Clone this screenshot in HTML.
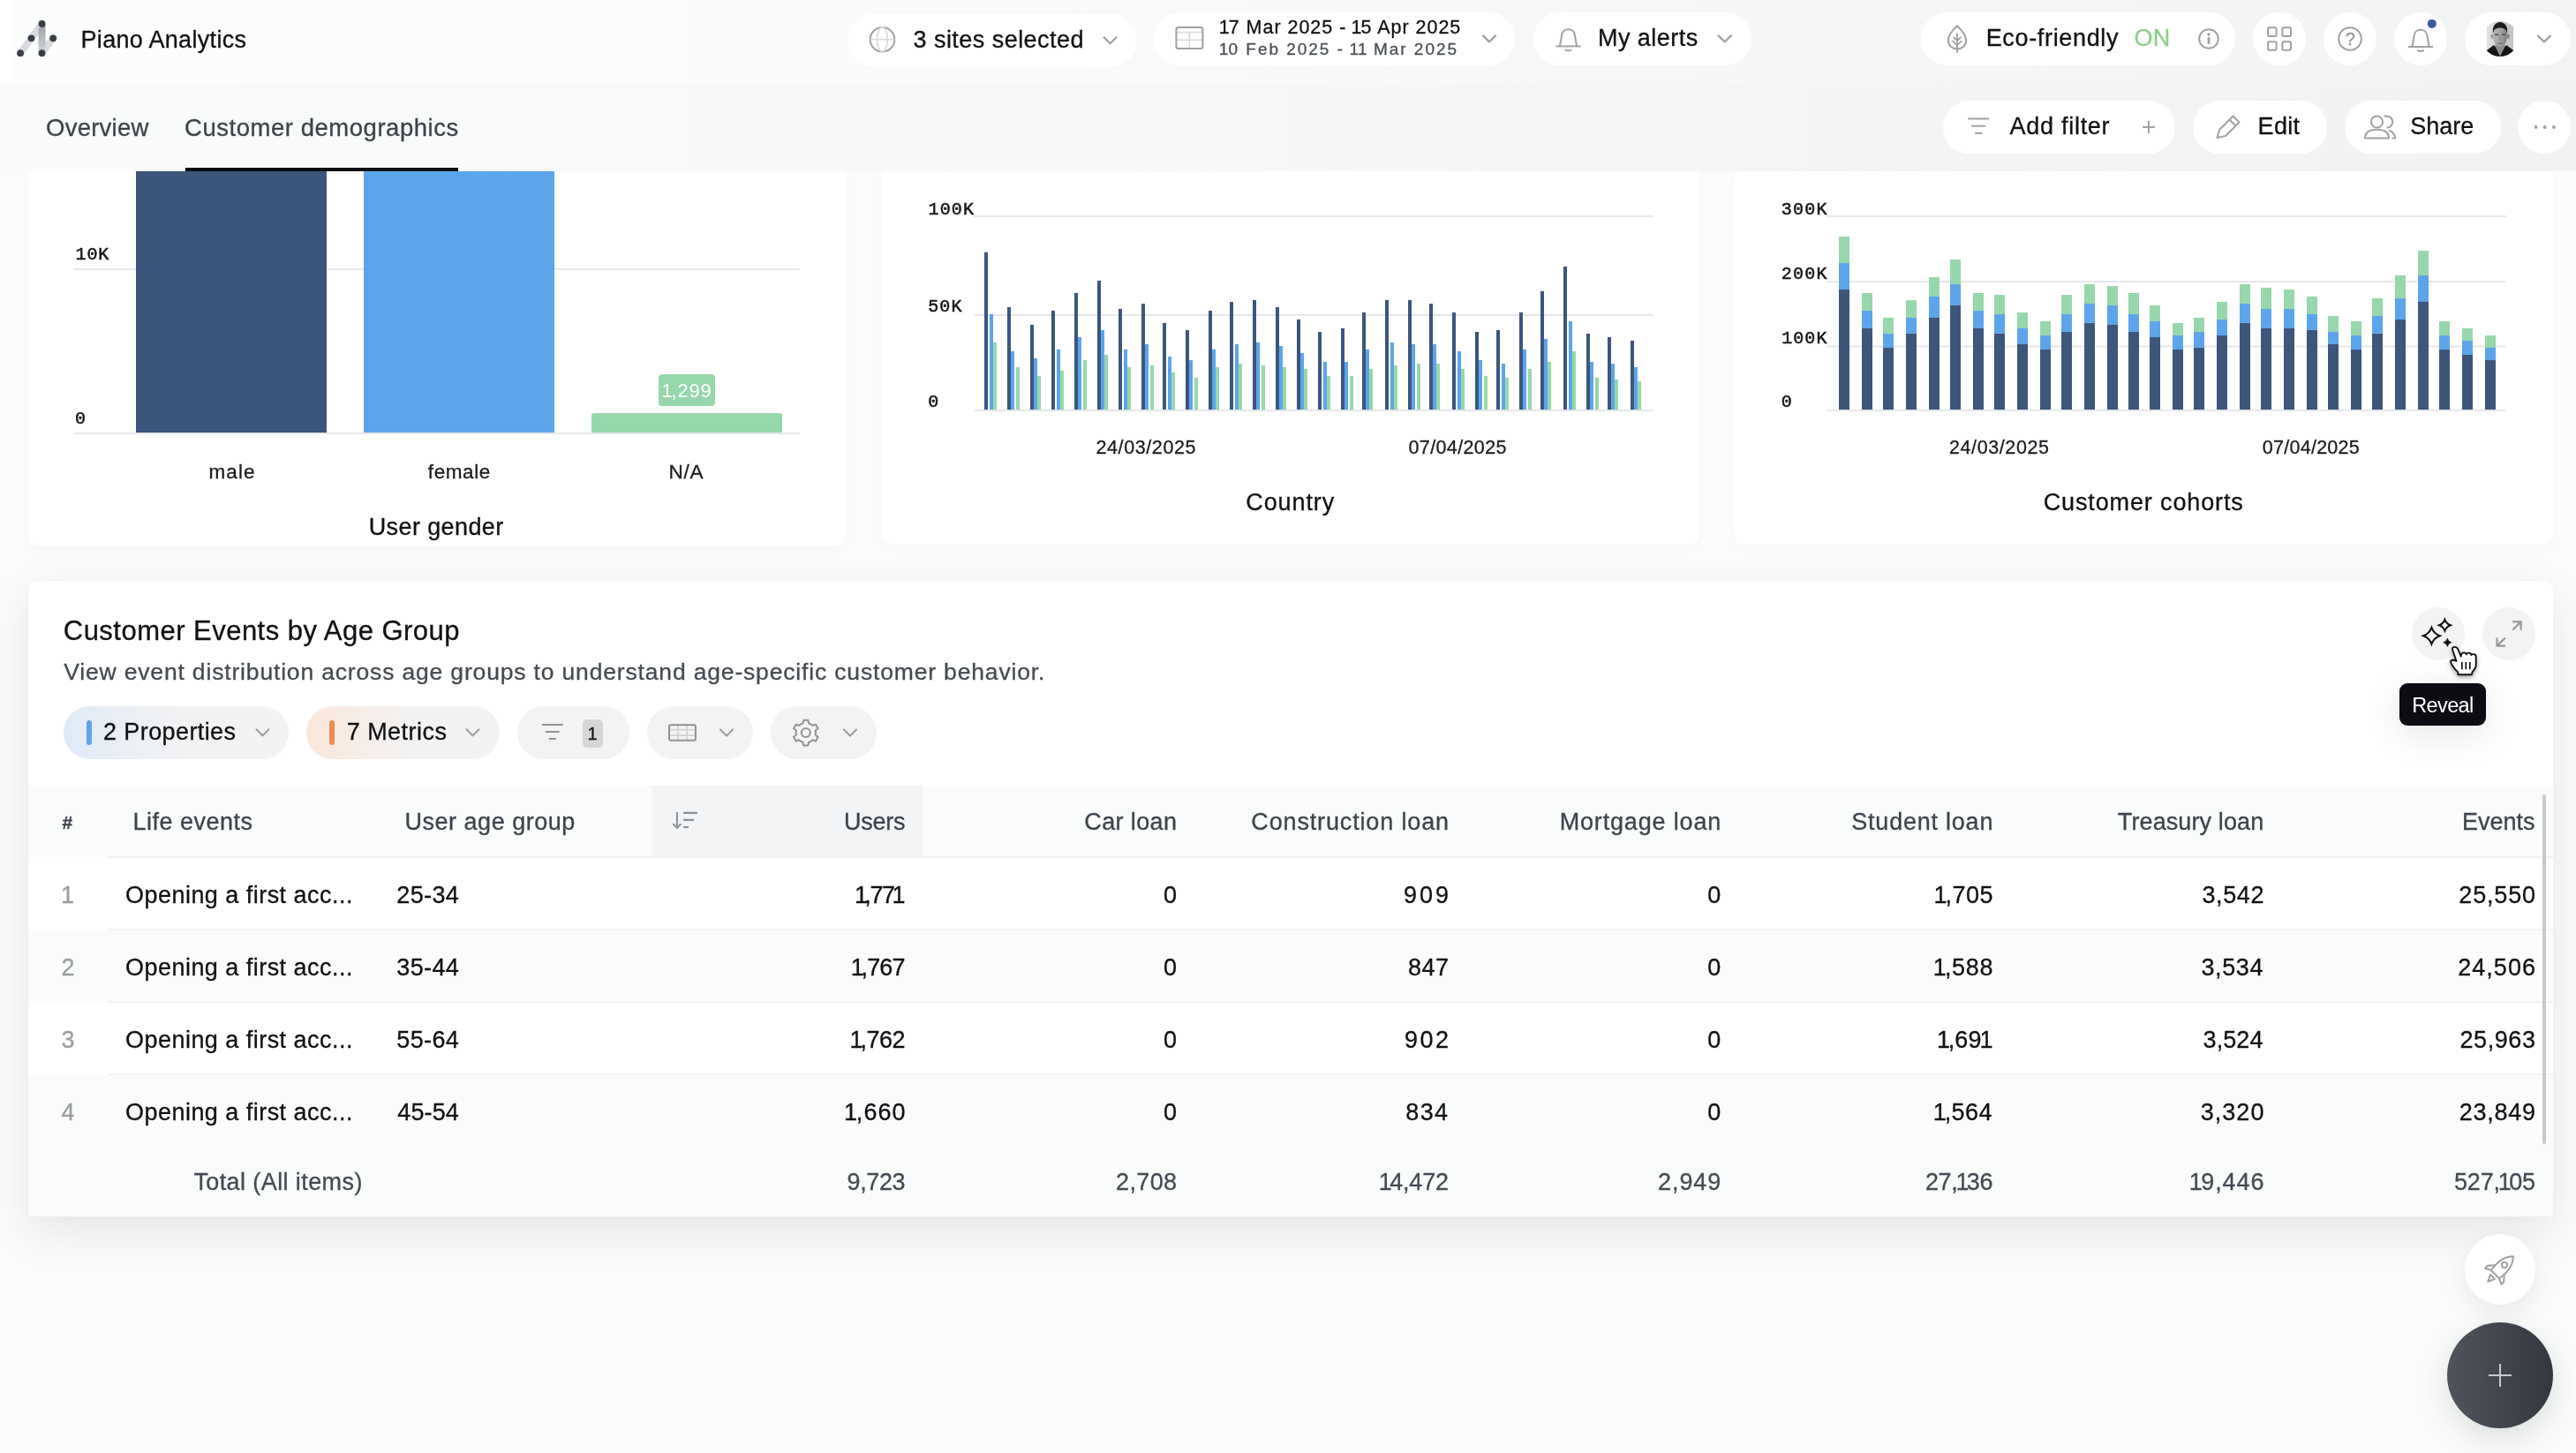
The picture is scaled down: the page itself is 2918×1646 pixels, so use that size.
<!DOCTYPE html><html lang="en"><head><meta charset="utf-8"><title>Piano Analytics</title><style>
*{box-sizing:border-box;margin:0;padding:0}
html,body{width:2918px;height:1646px;overflow:hidden;background:#fafbfb}
body{font-family:"Liberation Sans",sans-serif;color:#0f1115}
#app{position:relative;width:2918px;height:1646px;overflow:hidden;background:#fafbfb}
.t{position:absolute;white-space:nowrap;display:block}
.a{position:absolute;display:block}
.pill{position:absolute;background:#fff;border-radius:30px;height:60px}
.gp{position:absolute;background:#f3f3f3;border-radius:30px;height:60px}
.card{position:absolute;background:#fff}
svg{position:absolute;overflow:visible}
#tx{position:absolute;left:0;top:0;width:2918px;height:1646px;will-change:transform}
.t{-webkit-text-stroke:0.3px currentColor}
.t i{font-style:normal;margin:0 -0.089em 0 -0.0815em}
.m{font-family:"Liberation Mono",monospace;-webkit-text-stroke:0.55px currentColor}

</style></head><body><div id="app">
<div class="a" style="left:0;top:0;width:2918px;height:94px;background:linear-gradient(90deg,#fcfdfd 0%,#f9fafa 40%,#f2f3f3 100%)"></div>
<div class="a" style="left:0;top:94px;width:2918px;height:100px;background:linear-gradient(90deg,#fafbfb 0%,#f7f8f8 40%,#f1f2f2 100%)"></div>
<div class="a" style="left:0;top:0;width:12px;height:94px;background:#fff"></div>
<div class="card" style="left:32px;top:194px;width:926px;height:424px;border-radius:0 0 10px 10px;box-shadow:0 4px 14px rgba(0,0,0,.015)"></div>
<div class="card" style="left:999px;top:194px;width:925px;height:423px;border-radius:0 0 10px 10px;box-shadow:0 4px 14px rgba(0,0,0,.015)"></div>
<div class="card" style="left:1965px;top:194px;width:927px;height:423px;border-radius:0 0 10px 10px;box-shadow:0 4px 14px rgba(0,0,0,.015)"></div>
<div class="card" style="left:32px;top:658px;width:2860px;height:720px;border-radius:10px 10px 0 0;box-shadow:0 18px 50px rgba(0,0,0,.085),0 2px 8px rgba(0,0,0,.02)"></div>
<div class="pill" style="left:960px;top:16px;width:328px;height:60px;"></div>
<div class="pill" style="left:1307px;top:14px;width:409px;height:60px;"></div>
<div class="pill" style="left:1737px;top:14px;width:247px;height:60px;"></div>
<div class="pill" style="left:2176px;top:14px;width:356px;height:60px;"></div>
<div class="pill" style="left:2552px;top:14px;width:60px;height:60px;"></div>
<div class="pill" style="left:2632px;top:14px;width:60px;height:60px;"></div>
<div class="pill" style="left:2712px;top:14px;width:60px;height:60px;"></div>
<div class="pill" style="left:2792px;top:14px;width:120px;height:60px;"></div>
<div class="pill" style="left:2201px;top:114px;width:263px;height:60px;"></div>
<div class="pill" style="left:2484px;top:114px;width:152px;height:60px;"></div>
<div class="pill" style="left:2656px;top:114px;width:177px;height:60px;"></div>
<div class="pill" style="left:2852px;top:114px;width:60px;height:60px;"></div>
<div class="a" style="left:210px;top:190px;width:309px;height:4px;background:#0b0c10"></div>
<div class="gp" style="left:72px;top:800px;width:255px;height:60px;background:linear-gradient(90deg,#dfeaf8 0%,#eaeef4 25%,#f2f2f3 55%,#f3f3f3 100%)"></div>
<div class="gp" style="left:347px;top:800px;width:219px;height:60px;background:linear-gradient(90deg,#fbe6d8 0%,#f6ece6 25%,#f3f2f2 55%,#f3f3f3 100%)"></div>
<div class="gp" style="left:586px;top:800px;width:127px;height:60px;"></div>
<div class="gp" style="left:733px;top:800px;width:120px;height:60px;"></div>
<div class="gp" style="left:873px;top:800px;width:120px;height:60px;"></div>
<div class="a" style="left:98px;top:816px;width:6px;height:28px;border-radius:3px;background:#5da5ea"></div>
<div class="a" style="left:373px;top:816px;width:6px;height:28px;border-radius:3px;background:#ea8d4e"></div>
<div class="a" style="left:660px;top:815px;width:23px;height:32px;border-radius:5px;background:#d6d6d7"></div>
<div class="gp" style="left:2732px;top:688px;width:60px;height:60px;"></div>
<div class="gp" style="left:2812px;top:688px;width:60px;height:60px;"></div>
<div class="a" style="left:32px;top:890px;width:2860px;height:81px;background:#fafbfb"></div>
<div class="a" style="left:738px;top:890px;width:307px;height:81px;background:#f3f4f6"></div>
<div class="a" style="left:122px;top:970px;width:2770px;height:2px;background:#eff0f1"></div>
<div class="a" style="left:32px;top:972px;width:2860px;height:82px;background:#ffffff"></div>
<div class="a" style="left:122px;top:1052px;width:2770px;height:2px;background:#f2f3f3"></div>
<div class="a" style="left:32px;top:1054px;width:2860px;height:82px;background:#fafbfb"></div>
<div class="a" style="left:122px;top:1134px;width:2770px;height:2px;background:#f2f3f3"></div>
<div class="a" style="left:32px;top:1136px;width:2860px;height:82px;background:#ffffff"></div>
<div class="a" style="left:122px;top:1216px;width:2770px;height:2px;background:#f2f3f3"></div>
<div class="a" style="left:32px;top:1218px;width:2860px;height:82px;background:#fafbfb"></div>
<div class="a" style="left:32px;top:1300px;width:2860px;height:78px;background:#fafbfb"></div>
<div class="a" style="left:2880px;top:900px;width:4px;height:396px;border-radius:2px;background:#c9c9cb"></div>
<div class="a" style="left:2792px;top:1398px;width:80px;height:80px;border-radius:40px;background:#fff;box-shadow:0 10px 30px rgba(0,0,0,.08)"></div>
<div class="a" style="left:2772px;top:1498px;width:120px;height:120px;border-radius:60px;background:linear-gradient(90deg,#50545d,#34373f);box-shadow:0 12px 36px rgba(0,0,0,.12)"></div>
<svg width="2918" height="1646" viewBox="0 0 2918 1646" style="left:0;top:0"><defs><linearGradient id="lg1" x1="0" y1="0" x2="0" y2="1"><stop offset="0" stop-color="#9c9eaa"/><stop offset="1" stop-color="#d4d5da"/></linearGradient></defs><line x1="23.1" y1="60.2" x2="47.5" y2="27" stroke="#d9dade" stroke-width="8" stroke-linecap="round"/><line x1="47.5" y1="60.2" x2="60.2" y2="43.3" stroke="#d9dade" stroke-width="8" stroke-linecap="round"/><path d="M43.5 32.5 L51.5 27 L51.5 54.8 L43.5 60.2 Z" fill="url(#lg1)"/><circle cx="47.5" cy="27" r="3.9" fill="#3b3e47"/><circle cx="35.5" cy="43.3" r="3.9" fill="#3b3e47"/><circle cx="60.2" cy="43.3" r="3.9" fill="#3b3e47"/><circle cx="23.1" cy="60.2" r="3.9" fill="#3b3e47"/><circle cx="47.5" cy="60.2" r="3.9" fill="#3b3e47"/><circle cx="999.5" cy="44.7" r="13.8" fill="none" stroke="#9ea1a5" stroke-width="2"/><ellipse cx="999.5" cy="44.7" rx="6" ry="13.8" fill="none" stroke="#d9dadc" stroke-width="1.6"/><line x1="985.7" y1="44.7" x2="1013.3" y2="44.7" stroke="#d9dadc" stroke-width="1.6"/><polyline points="1250.5,42.3 1257.5,49.3 1264.5,42.3" fill="none" stroke="#9ea1a5" stroke-width="2.2" stroke-linecap="round" stroke-linejoin="round"/><line x1="1332" y1="36.5" x2="1363" y2="36.5" stroke="#d9dadc" stroke-width="1.6"/><line x1="1332" y1="45.3" x2="1363" y2="45.3" stroke="#d9dadc" stroke-width="1.6"/><line x1="1347.3" y1="36.5" x2="1347.3" y2="55" stroke="#d9dadc" stroke-width="1.6"/><rect x="1332.4" y="31" width="30" height="24" rx="2.5" fill="none" stroke="#9ea1a5" stroke-width="2"/><polyline points="1680,40.4 1687.0,47.4 1694,40.4" fill="none" stroke="#9ea1a5" stroke-width="2.2" stroke-linecap="round" stroke-linejoin="round"/><path d="M1762.5 52.4 H1790.5" stroke="#9ea1a5" stroke-width="2" fill="none"/><path d="M1766.9 52.4 L1769.1 39.9 C1769.9 30.9 1783.1 30.9 1783.9 39.9 L1786.1 52.4" stroke="#9ea1a5" stroke-width="2" fill="none" stroke-linejoin="round"/><path d="M1772.7 56.4 Q1776.5 58.4 1780.3 56.4" stroke="#9ea1a5" stroke-width="2" fill="none"/><polyline points="1946.5,40.4 1953.75,47.4 1961,40.4" fill="none" stroke="#9ea1a5" stroke-width="2.2" stroke-linecap="round" stroke-linejoin="round"/><path d="M2217 29.3 C2211 35 2206.8 40.5 2206.8 45.8 C2206.8 51.5 2211.2 55.4 2217 55.4 C2222.8 55.4 2227.2 51.5 2227.2 45.8 C2227.2 40.5 2223 35 2217 29.3 Z" fill="none" stroke="#9ea1a5" stroke-width="2" stroke-linejoin="round"/><path d="M2217 37.5 V59.8 M2217 46.2 L2212.6 42 M2217 46.2 L2221.4 42 M2217 51.2 L2211.6 46.2 M2217 51.2 L2222.4 46.2" fill="none" stroke="#9ea1a5" stroke-width="1.8"/><circle cx="2502" cy="44" r="10.8" fill="none" stroke="#9ea1a5" stroke-width="2"/><circle cx="2502" cy="39" r="1.8" fill="#9ea1a5"/><rect x="2500.6" y="42.2" width="2.8" height="7.6" fill="#9ea1a5"/><rect x="2569" y="31.3" width="9.6" height="9.6" rx="1.5" fill="none" stroke="#9ea1a5" stroke-width="2"/><rect x="2569" y="47.2" width="9.6" height="9.6" rx="1.5" fill="none" stroke="#9ea1a5" stroke-width="2"/><rect x="2585.4" y="31.3" width="9.6" height="9.6" rx="1.5" fill="none" stroke="#9ea1a5" stroke-width="2"/><rect x="2585.4" y="47.2" width="9.6" height="9.6" rx="1.5" fill="none" stroke="#9ea1a5" stroke-width="2"/><circle cx="2662" cy="44" r="12.8" fill="none" stroke="#9ea1a5" stroke-width="2"/><path d="M2728.0 53 H2756.0" stroke="#9ea1a5" stroke-width="2" fill="none"/><path d="M2732.4 53 L2734.6 40.5 C2735.4 31.5 2748.6 31.5 2749.4 40.5 L2751.6 53" stroke="#9ea1a5" stroke-width="2" fill="none" stroke-linejoin="round"/><path d="M2738.2 57 Q2742 59 2745.8 57" stroke="#9ea1a5" stroke-width="2" fill="none"/><circle cx="2754.8" cy="26.9" r="5" fill="#3a5aa6"/><defs><clipPath id="av"><circle cx="2832" cy="44" r="20"/></clipPath><linearGradient id="avbg" x1="0" y1="0" x2="1" y2="0"><stop offset="0" stop-color="#e2e2e2"/><stop offset="1" stop-color="#c2c2c2"/></linearGradient><linearGradient id="avf" x1="0" y1="0" x2="1" y2="0"><stop offset="0" stop-color="#b4b4b4"/><stop offset="0.55" stop-color="#a2a2a2"/><stop offset="1" stop-color="#7e7e7e"/></linearGradient><filter id="avb" x="-20%" y="-20%" width="140%" height="140%"><feGaussianBlur stdDeviation="0.55"/></filter></defs><g clip-path="url(#av)"><rect x="2817" y="22" width="30" height="44" fill="url(#avbg)"/><g filter="url(#avb)"><path d="M2826.5 47 H2837.5 V64 H2826.5 Z" fill="#8c8c8c"/><path d="M2815 58.5 L2824.6 51.2 L2826.4 52.4 L2832 64 L2837.6 52.4 L2839.4 51.2 L2849 58.5 V68 H2815 Z" fill="#151515"/><ellipse cx="2822.8" cy="41.2" rx="1.5" ry="2.8" fill="#9a9a9a"/><ellipse cx="2841.2" cy="41.2" rx="1.5" ry="2.8" fill="#808080"/><path d="M2824 35 C2824 26 2840 26 2840 35 L2839.6 44 C2839 49.5 2835.5 52.6 2832 52.6 C2828.5 52.6 2825 49.5 2824.4 44 Z" fill="url(#avf)"/><path d="M2823.9 38 C2821.6 20.8 2842.4 20.8 2840.1 38 C2839.6 33.4 2836.8 31.4 2832 31.4 C2827.2 31.4 2824.4 33.4 2823.9 38 Z" fill="#1b1b1b"/><path d="M2826 39.2 H2830.4 M2833.8 39.2 H2838.2" stroke="#4a4a4a" stroke-width="1.5"/><path d="M2829.4 49.2 H2835" stroke="#666" stroke-width="1.2"/><path d="M2832.4 40 L2831.4 45.2 H2833.6" stroke="#7a7a7a" stroke-width="1" fill="none"/></g></g><polyline points="2874.8,40.6 2881.9,47.4 2889,40.6" fill="none" stroke="#9ea1a5" stroke-width="2.2" stroke-linecap="round" stroke-linejoin="round"/><line x1="2229.2" y1="134.5" x2="2253.2" y2="134.5" stroke="#9ea1a5" stroke-width="2"/><line x1="2233.2" y1="142.7" x2="2249.2" y2="142.7" stroke="#9ea1a5" stroke-width="2"/><line x1="2237.2" y1="150.9" x2="2245.2" y2="150.9" stroke="#9ea1a5" stroke-width="2"/><path d="M2427 144 H2441 M2434 137 V151" stroke="#9ea1a5" stroke-width="2" fill="none"/><path d="M2511.5 156 L2514 147 L2529.5 131.5 L2536.5 138.5 L2521 154 Z M2525.5 135.5 L2532.5 142.5" fill="none" stroke="#9ea1a5" stroke-width="2" stroke-linejoin="round"/><circle cx="2692.5" cy="138" r="6.6" fill="none" stroke="#9ea1a5" stroke-width="2"/><path d="M2679 156.5 C2679 149.5 2685 146.8 2692.5 146.8 C2700 146.8 2706 149.5 2706 156.5 Z" fill="none" stroke="#9ea1a5" stroke-width="2" stroke-linejoin="round"/><path d="M2700.5 131.8 C2706.5 130.5 2710.2 134 2710.2 138 C2710.2 141.5 2707.5 144.4 2703.5 144.6 M2706 147.6 C2710.5 149 2713 152 2713.2 156.5 H2709.5" fill="none" stroke="#9ea1a5" stroke-width="2"/><circle cx="2872.5" cy="144" r="1.9" fill="#9ea1a5"/><circle cx="2882.7" cy="144" r="1.9" fill="#9ea1a5"/><circle cx="2892.9" cy="144" r="1.9" fill="#9ea1a5"/><polyline points="290.5,826.3 297.5,833.3 304.5,826.3" fill="none" stroke="#9ea1a5" stroke-width="2.2" stroke-linecap="round" stroke-linejoin="round"/><polyline points="528.5,826.3 535.5,833.3 542.5,826.3" fill="none" stroke="#9ea1a5" stroke-width="2.2" stroke-linecap="round" stroke-linejoin="round"/><line x1="613.8" y1="821" x2="637.8" y2="821" stroke="#8f9296" stroke-width="2"/><line x1="618.0" y1="829" x2="633.5999999999999" y2="829" stroke="#8f9296" stroke-width="2"/><line x1="621.9" y1="837" x2="629.6999999999999" y2="837" stroke="#8f9296" stroke-width="2"/><path d="M758 826.7 H788 M758 833.1 H788 M767.8 821 V839 M778.2 821 V839" stroke="#d0d1d3" stroke-width="1.6" fill="none"/><rect x="758" y="821.2" width="30" height="17.6" rx="2" fill="none" stroke="#8f9296" stroke-width="2"/><polyline points="816,826.5 823.0,833.5 830,826.5" fill="none" stroke="#9ea1a5" stroke-width="2.2" stroke-linecap="round" stroke-linejoin="round"/><path d="M907.65 820.16 L909.52 819.39 L910.24 815.73 L915.36 815.73 L916.08 819.39 L918.84 820.67 L920.44 821.91 L923.97 820.70 L926.53 825.13 L923.71 827.58 L923.99 830.61 L923.71 832.62 L926.53 835.07 L923.97 839.50 L920.44 838.29 L917.95 840.04 L916.08 840.81 L915.36 844.47 L910.24 844.47 L909.52 840.81 L906.76 839.53 L905.16 838.29 L901.63 839.50 L899.07 835.07 L901.89 832.62 L901.61 829.59 L901.89 827.58 L899.07 825.13 L901.63 820.70 L905.16 821.91 Z" fill="none" stroke="#8f9296" stroke-width="2" stroke-linejoin="round"/><circle cx="912.8" cy="830.1" r="5" fill="none" stroke="#8f9296" stroke-width="2"/><polyline points="956,826.5 963.0,833.5 970,826.5" fill="none" stroke="#9ea1a5" stroke-width="2.2" stroke-linecap="round" stroke-linejoin="round"/><path d="M766.9 920 V937.6 M762.4 933.2 L766.9 937.8 L771.4 933.2" stroke="#8d9197" stroke-width="2" fill="none"/><path d="M774.1 920.8 H790 M774.1 928.9 H786 M774.1 937 H780" stroke="#8d9197" stroke-width="2.2" fill="none"/><path d="M2754.4 710.9 Q2756.844 717.856 2763.8 720.3 Q2756.844 722.7439999999999 2754.4 729.6999999999999 Q2751.956 722.7439999999999 2745.0 720.3 Q2751.956 717.856 2754.4 710.9 Z" fill="none" stroke="#0f1115" stroke-width="2" stroke-linejoin="miter" stroke-miterlimit="6"/><path d="M2769.4 701.8000000000001 Q2771.0640000000003 706.5360000000001 2775.8 708.2 Q2771.0640000000003 709.864 2769.4 714.6 Q2767.736 709.864 2763.0 708.2 Q2767.736 706.5360000000001 2769.4 701.8000000000001 Z" fill="none" stroke="#0f1115" stroke-width="2" stroke-linejoin="miter" stroke-miterlimit="6"/><path d="M2772.3 723.1999999999999 Q2773.2200000000003 726.88 2776.9 727.8 Q2773.2200000000003 728.7199999999999 2772.3 732.4 Q2771.38 728.7199999999999 2767.7000000000003 727.8 Q2771.38 726.88 2772.3 723.1999999999999 Z" fill="#0f1115" stroke="#0f1115" stroke-width="0.8" stroke-linejoin="miter" stroke-miterlimit="6"/><path d="M2846.3 713.6 L2855.6 704.4 M2846.2 704.4 H2855.6 V713.8" stroke="#969a9e" stroke-width="2.2" fill="none"/><path d="M2837.8 722.6 L2828.5 731.6 M2828.5 722.4 V731.6 H2838" stroke="#969a9e" stroke-width="2.2" fill="none"/><g transform="translate(2832,1438) rotate(45)" fill="none" stroke="#9ea1a5" stroke-width="2" stroke-linejoin="round"><path d="M0 -21 C7 -14 8.5 -4 6.5 8 H-6.5 C-8.5 -4 -7 -14 0 -21 Z"/><circle cx="0" cy="-7" r="3.2"/><path d="M-6.8 0 L-13 7 V11 L-6.5 8 M6.8 0 L13 7 V11 L6.5 8"/><path d="M-3.5 12 L0 19.5 L3.5 12 Z"/></g><path d="M2819 1558 H2845 M2832 1545 V1571" stroke="#c9cacd" stroke-width="2" fill="none"/><rect x="84" y="304" width="822" height="2" fill="#e6e7e9"/><rect x="84" y="490" width="822" height="2" fill="#e6e7e9"/><rect x="154" y="194" width="216" height="296" fill="#3d567c"/><rect x="412" y="194" width="216" height="296" fill="#5da5ea"/><path d="M670 490 V471 Q670 468 673 468 H883 Q886 468 886 471 V490 Z" fill="#96d8ab"/><rect x="746" y="424" width="64" height="36" rx="4" fill="#96d8ab"/><rect x="1103" y="244" width="770" height="2" fill="#e6e7e9"/><rect x="1103" y="356" width="770" height="2" fill="#e6e7e9"/><rect x="1103" y="464" width="770" height="2" fill="#e6e7e9"/><rect x="1115" y="285.7" width="4" height="178.3" fill="#3d567c"/><rect x="1121" y="355.9" width="4" height="108.1" fill="#5da5ea"/><rect x="1125" y="387.9" width="4" height="76.1" fill="#96d8ab"/><rect x="1141" y="347.9" width="4" height="116.1" fill="#3d567c"/><rect x="1145" y="397.9" width="4" height="66.1" fill="#5da5ea"/><rect x="1151" y="415.9" width="4" height="48.1" fill="#96d8ab"/><rect x="1167" y="367.9" width="4" height="96.1" fill="#3d567c"/><rect x="1171" y="405.9" width="4" height="58.1" fill="#5da5ea"/><rect x="1175" y="425.8" width="4" height="38.2" fill="#96d8ab"/><rect x="1191" y="351.9" width="4" height="112.1" fill="#3d567c"/><rect x="1197" y="395.8" width="4" height="68.2" fill="#5da5ea"/><rect x="1201" y="419.9" width="4" height="44.1" fill="#96d8ab"/><rect x="1217" y="331.9" width="4" height="132.1" fill="#3d567c"/><rect x="1221" y="381.9" width="4" height="82.1" fill="#5da5ea"/><rect x="1227" y="407.9" width="4" height="56.1" fill="#96d8ab"/><rect x="1243" y="317.9" width="4" height="146.1" fill="#3d567c"/><rect x="1247" y="373.9" width="4" height="90.1" fill="#5da5ea"/><rect x="1251" y="401.9" width="4" height="62.1" fill="#96d8ab"/><rect x="1267" y="349.9" width="4" height="114.1" fill="#3d567c"/><rect x="1273" y="395.8" width="4" height="68.2" fill="#5da5ea"/><rect x="1277" y="415.9" width="4" height="48.1" fill="#96d8ab"/><rect x="1293" y="344.0" width="4" height="120.0" fill="#3d567c"/><rect x="1297" y="389.9" width="4" height="74.1" fill="#5da5ea"/><rect x="1303" y="414.0" width="4" height="50.0" fill="#96d8ab"/><rect x="1317" y="365.9" width="4" height="98.1" fill="#3d567c"/><rect x="1323" y="403.9" width="4" height="60.1" fill="#5da5ea"/><rect x="1327" y="421.9" width="4" height="42.1" fill="#96d8ab"/><rect x="1343" y="373.9" width="4" height="90.1" fill="#3d567c"/><rect x="1347" y="407.9" width="4" height="56.1" fill="#5da5ea"/><rect x="1353" y="427.8" width="4" height="36.2" fill="#96d8ab"/><rect x="1369" y="351.9" width="4" height="112.1" fill="#3d567c"/><rect x="1373" y="395.8" width="4" height="68.2" fill="#5da5ea"/><rect x="1377" y="415.9" width="4" height="48.1" fill="#96d8ab"/><rect x="1393" y="342.0" width="4" height="122.0" fill="#3d567c"/><rect x="1399" y="389.9" width="4" height="74.1" fill="#5da5ea"/><rect x="1403" y="412.0" width="4" height="52.0" fill="#96d8ab"/><rect x="1419" y="339.9" width="4" height="124.1" fill="#3d567c"/><rect x="1423" y="387.9" width="4" height="76.1" fill="#5da5ea"/><rect x="1429" y="414.0" width="4" height="50.0" fill="#96d8ab"/><rect x="1445" y="347.9" width="4" height="116.1" fill="#3d567c"/><rect x="1449" y="392.0" width="4" height="72.0" fill="#5da5ea"/><rect x="1453" y="415.9" width="4" height="48.1" fill="#96d8ab"/><rect x="1469" y="361.8" width="4" height="102.2" fill="#3d567c"/><rect x="1473" y="399.9" width="4" height="64.1" fill="#5da5ea"/><rect x="1477" y="417.9" width="4" height="46.1" fill="#96d8ab"/><rect x="1493" y="376.0" width="4" height="88.0" fill="#3d567c"/><rect x="1499" y="410.0" width="4" height="54.0" fill="#5da5ea"/><rect x="1503" y="425.8" width="4" height="38.2" fill="#96d8ab"/><rect x="1519" y="371.9" width="4" height="92.1" fill="#3d567c"/><rect x="1523" y="410.0" width="4" height="54.0" fill="#5da5ea"/><rect x="1529" y="425.8" width="4" height="38.2" fill="#96d8ab"/><rect x="1543" y="353.9" width="4" height="110.1" fill="#3d567c"/><rect x="1547" y="395.8" width="4" height="68.2" fill="#5da5ea"/><rect x="1551" y="417.9" width="4" height="46.1" fill="#96d8ab"/><rect x="1569" y="339.9" width="4" height="124.1" fill="#3d567c"/><rect x="1575" y="387.9" width="4" height="76.1" fill="#5da5ea"/><rect x="1579" y="414.0" width="4" height="50.0" fill="#96d8ab"/><rect x="1595" y="339.9" width="4" height="124.1" fill="#3d567c"/><rect x="1599" y="389.9" width="4" height="74.1" fill="#5da5ea"/><rect x="1605" y="412.0" width="4" height="52.0" fill="#96d8ab"/><rect x="1619" y="344.0" width="4" height="120.0" fill="#3d567c"/><rect x="1623" y="389.9" width="4" height="74.1" fill="#5da5ea"/><rect x="1627" y="412.0" width="4" height="52.0" fill="#96d8ab"/><rect x="1645" y="353.9" width="4" height="110.1" fill="#3d567c"/><rect x="1651" y="397.9" width="4" height="66.1" fill="#5da5ea"/><rect x="1655" y="417.9" width="4" height="46.1" fill="#96d8ab"/><rect x="1671" y="376.0" width="4" height="88.0" fill="#3d567c"/><rect x="1675" y="407.9" width="4" height="56.1" fill="#5da5ea"/><rect x="1681" y="425.8" width="4" height="38.2" fill="#96d8ab"/><rect x="1695" y="373.9" width="4" height="90.1" fill="#3d567c"/><rect x="1701" y="412.0" width="4" height="52.0" fill="#5da5ea"/><rect x="1705" y="427.8" width="4" height="36.2" fill="#96d8ab"/><rect x="1721" y="353.9" width="4" height="110.1" fill="#3d567c"/><rect x="1725" y="395.8" width="4" height="68.2" fill="#5da5ea"/><rect x="1731" y="417.9" width="4" height="46.1" fill="#96d8ab"/><rect x="1745" y="329.8" width="4" height="134.2" fill="#3d567c"/><rect x="1749" y="383.9" width="4" height="80.1" fill="#5da5ea"/><rect x="1753" y="410.0" width="4" height="54.0" fill="#96d8ab"/><rect x="1771" y="301.9" width="4" height="162.1" fill="#3d567c"/><rect x="1777" y="363.8" width="4" height="100.2" fill="#5da5ea"/><rect x="1781" y="397.9" width="4" height="66.1" fill="#96d8ab"/><rect x="1797" y="378.0" width="4" height="86.0" fill="#3d567c"/><rect x="1801" y="410.0" width="4" height="54.0" fill="#5da5ea"/><rect x="1807" y="427.8" width="4" height="36.2" fill="#96d8ab"/><rect x="1821" y="381.9" width="4" height="82.1" fill="#3d567c"/><rect x="1825" y="412.0" width="4" height="52.0" fill="#5da5ea"/><rect x="1829" y="429.8" width="4" height="34.2" fill="#96d8ab"/><rect x="1847" y="385.9" width="4" height="78.1" fill="#3d567c"/><rect x="1851" y="415.9" width="4" height="48.1" fill="#5da5ea"/><rect x="1855" y="431.9" width="4" height="32.1" fill="#96d8ab"/><rect x="2069" y="244" width="770" height="2" fill="#e6e7e9"/><rect x="2069" y="318" width="770" height="2" fill="#e6e7e9"/><rect x="2069" y="391.5" width="770" height="2" fill="#e6e7e9"/><rect x="2069" y="464" width="770" height="2" fill="#e6e7e9"/><rect x="2083" y="268.0" width="12" height="30.0" fill="#96d8ab"/><rect x="2083" y="298.0" width="12" height="30.0" fill="#5da5ea"/><rect x="2083" y="328.0" width="12" height="136.0" fill="#3d567c"/><rect x="2109" y="332.0" width="12" height="20.0" fill="#96d8ab"/><rect x="2109" y="352.0" width="12" height="20.0" fill="#5da5ea"/><rect x="2109" y="372.0" width="12" height="92.0" fill="#3d567c"/><rect x="2133" y="359.9" width="12" height="18.0" fill="#96d8ab"/><rect x="2133" y="378.0" width="12" height="16.0" fill="#5da5ea"/><rect x="2133" y="393.9" width="12" height="70.1" fill="#3d567c"/><rect x="2159" y="340.1" width="12" height="19.9" fill="#96d8ab"/><rect x="2159" y="359.9" width="12" height="18.0" fill="#5da5ea"/><rect x="2159" y="378.0" width="12" height="86.0" fill="#3d567c"/><rect x="2185" y="314.0" width="12" height="21.9" fill="#96d8ab"/><rect x="2185" y="335.9" width="12" height="24.1" fill="#5da5ea"/><rect x="2185" y="359.9" width="12" height="104.1" fill="#3d567c"/><rect x="2209" y="293.9" width="12" height="28.0" fill="#96d8ab"/><rect x="2209" y="321.9" width="12" height="24.1" fill="#5da5ea"/><rect x="2209" y="346.0" width="12" height="118.0" fill="#3d567c"/><rect x="2235" y="332.0" width="12" height="20.0" fill="#96d8ab"/><rect x="2235" y="352.0" width="12" height="20.0" fill="#5da5ea"/><rect x="2235" y="372.0" width="12" height="92.0" fill="#3d567c"/><rect x="2259" y="334.0" width="12" height="21.9" fill="#96d8ab"/><rect x="2259" y="355.9" width="12" height="22.0" fill="#5da5ea"/><rect x="2259" y="378.0" width="12" height="86.0" fill="#3d567c"/><rect x="2285" y="354.0" width="12" height="18.0" fill="#96d8ab"/><rect x="2285" y="372.0" width="12" height="17.9" fill="#5da5ea"/><rect x="2285" y="389.9" width="12" height="74.1" fill="#3d567c"/><rect x="2311" y="364.0" width="12" height="16.0" fill="#96d8ab"/><rect x="2311" y="380.0" width="12" height="16.0" fill="#5da5ea"/><rect x="2311" y="396.0" width="12" height="68.0" fill="#3d567c"/><rect x="2335" y="334.0" width="12" height="21.9" fill="#96d8ab"/><rect x="2335" y="355.9" width="12" height="20.0" fill="#5da5ea"/><rect x="2335" y="375.9" width="12" height="88.1" fill="#3d567c"/><rect x="2361" y="321.9" width="12" height="22.0" fill="#96d8ab"/><rect x="2361" y="343.9" width="12" height="22.0" fill="#5da5ea"/><rect x="2361" y="366.0" width="12" height="98.0" fill="#3d567c"/><rect x="2387" y="324.1" width="12" height="21.9" fill="#96d8ab"/><rect x="2387" y="346.0" width="12" height="22.0" fill="#5da5ea"/><rect x="2387" y="368.0" width="12" height="96.0" fill="#3d567c"/><rect x="2411" y="332.0" width="12" height="23.9" fill="#96d8ab"/><rect x="2411" y="355.9" width="12" height="20.0" fill="#5da5ea"/><rect x="2411" y="375.9" width="12" height="88.1" fill="#3d567c"/><rect x="2435" y="346.0" width="12" height="18.0" fill="#96d8ab"/><rect x="2435" y="364.0" width="12" height="18.0" fill="#5da5ea"/><rect x="2435" y="382.0" width="12" height="82.0" fill="#3d567c"/><rect x="2461" y="366.0" width="12" height="14.0" fill="#96d8ab"/><rect x="2461" y="380.0" width="12" height="16.0" fill="#5da5ea"/><rect x="2461" y="396.0" width="12" height="68.0" fill="#3d567c"/><rect x="2485" y="359.9" width="12" height="16.0" fill="#96d8ab"/><rect x="2485" y="375.9" width="12" height="18.0" fill="#5da5ea"/><rect x="2485" y="393.9" width="12" height="70.1" fill="#3d567c"/><rect x="2511" y="341.9" width="12" height="20.0" fill="#96d8ab"/><rect x="2511" y="362.0" width="12" height="18.0" fill="#5da5ea"/><rect x="2511" y="380.0" width="12" height="84.0" fill="#3d567c"/><rect x="2537" y="321.9" width="12" height="22.0" fill="#96d8ab"/><rect x="2537" y="343.9" width="12" height="22.0" fill="#5da5ea"/><rect x="2537" y="366.0" width="12" height="98.0" fill="#3d567c"/><rect x="2561" y="325.9" width="12" height="24.1" fill="#96d8ab"/><rect x="2561" y="350.0" width="12" height="22.0" fill="#5da5ea"/><rect x="2561" y="372.0" width="12" height="92.0" fill="#3d567c"/><rect x="2587" y="328.0" width="12" height="22.0" fill="#96d8ab"/><rect x="2587" y="350.0" width="12" height="22.0" fill="#5da5ea"/><rect x="2587" y="372.0" width="12" height="92.0" fill="#3d567c"/><rect x="2613" y="335.9" width="12" height="20.0" fill="#96d8ab"/><rect x="2613" y="355.9" width="12" height="18.0" fill="#5da5ea"/><rect x="2613" y="373.9" width="12" height="90.1" fill="#3d567c"/><rect x="2637" y="357.9" width="12" height="18.0" fill="#96d8ab"/><rect x="2637" y="375.9" width="12" height="14.0" fill="#5da5ea"/><rect x="2637" y="389.9" width="12" height="74.1" fill="#3d567c"/><rect x="2663" y="364.0" width="12" height="16.0" fill="#96d8ab"/><rect x="2663" y="380.0" width="12" height="16.0" fill="#5da5ea"/><rect x="2663" y="396.0" width="12" height="68.0" fill="#3d567c"/><rect x="2687" y="337.9" width="12" height="20.0" fill="#96d8ab"/><rect x="2687" y="357.9" width="12" height="20.0" fill="#5da5ea"/><rect x="2687" y="378.0" width="12" height="86.0" fill="#3d567c"/><rect x="2713" y="312.0" width="12" height="25.9" fill="#96d8ab"/><rect x="2713" y="337.9" width="12" height="24.1" fill="#5da5ea"/><rect x="2713" y="362.0" width="12" height="102.0" fill="#3d567c"/><rect x="2739" y="284.0" width="12" height="28.0" fill="#96d8ab"/><rect x="2739" y="312.0" width="12" height="30.0" fill="#5da5ea"/><rect x="2739" y="341.9" width="12" height="122.1" fill="#3d567c"/><rect x="2763" y="364.0" width="12" height="16.0" fill="#96d8ab"/><rect x="2763" y="380.0" width="12" height="16.0" fill="#5da5ea"/><rect x="2763" y="396.0" width="12" height="68.0" fill="#3d567c"/><rect x="2789" y="372.0" width="12" height="14.0" fill="#96d8ab"/><rect x="2789" y="386.0" width="12" height="16.0" fill="#5da5ea"/><rect x="2789" y="402.0" width="12" height="62.0" fill="#3d567c"/><rect x="2815" y="380.0" width="12" height="14.0" fill="#96d8ab"/><rect x="2815" y="393.9" width="12" height="14.0" fill="#5da5ea"/><rect x="2815" y="407.9" width="12" height="56.1" fill="#3d567c"/></svg>
<div class="a" style="left:2718px;top:774px;width:98px;height:48px;border-radius:9px;background:#0b0d12;box-shadow:0 10px 40px rgba(0,0,0,.10)"></div>
<svg width="40" height="40" viewBox="0 0 40 40" style="left:2772px;top:730px;filter:drop-shadow(0 2px 2.5px rgba(0,0,0,.35))"><path d="M6.2 6.2 C5.4 3.6 7.4 2.6 9 2.9 C10.8 3.1 11.8 4 12.4 5.6 L15.7 13.6 C15.9 11 17.4 9.4 19.3 9.4 C20.8 9.4 21.6 10.2 21.8 11.4 C22.2 10.2 23.2 9.6 24.6 9.6 C26.2 9.6 27.2 10.6 27.4 12 C27.9 11.3 28.8 11 30 11.1 C31.8 11.2 32.7 12.2 32.7 14 L32.7 23.6 C32.7 27 30 29.6 28.5 31.4 L27.9 34.3 L12.4 34.3 L12.3 31.4 C10.4 29.6 8.4 27.6 7 25.4 C5.8 23.6 4.2 21.6 4.1 20.2 C4 18.8 5 17.9 6.4 17.8 C8 17.7 9.4 18.2 10.5 19 Z" fill="#fff" stroke="#0f1115" stroke-width="1.9" stroke-linejoin="round"/><path d="M16.8 20 V28.2 M21.3 20 V28.2 M25.8 20 V28.2" stroke="#0f1115" stroke-width="1.7" fill="none"/></svg>
<div id="tx">
<span class="t" style="left:91.50px;top:27px;font-size:27px;line-height:36px;color:#0f1115;letter-spacing:0.315px;">Piano Analytics</span>
<span class="t" style="left:1034.50px;top:27px;font-size:27px;line-height:36px;color:#0f1115;letter-spacing:0.461px;">3 sites selected</span>
<span class="t" style="left:1382.45px;top:17px;font-size:21.5px;line-height:28px;color:#0f1115;letter-spacing:0.974px;"><i>1</i>7 Mar 2025 - <i>1</i>5 Apr 2025</span>
<span class="t" style="left:1382.25px;top:43px;font-size:19px;line-height:25px;color:#4a4f57;letter-spacing:1.966px;"><i>1</i>0 Feb 2025 - <i>1</i><i>1</i> Mar 2025</span>
<span class="t" style="left:1810.00px;top:25px;font-size:27px;line-height:36px;color:#0f1115;letter-spacing:0.460px;">My alerts</span>
<span class="t" style="left:2249.70px;top:25px;font-size:27px;line-height:36px;color:#0f1115;letter-spacing:0.659px;">Eco-friendly</span>
<span class="t" style="left:2417.60px;top:25px;font-size:27px;line-height:36px;color:#8fce8f;letter-spacing:0.099px;">ON</span>
<span class="t" style="left:2656.70px;top:31px;font-size:20px;line-height:26px;color:#8f9297;">?</span>
<span class="t" style="left:52.00px;top:127px;font-size:27.5px;line-height:36px;color:#3d434b;letter-spacing:0.251px;">Overview</span>
<span class="t" style="left:209.00px;top:127px;font-size:27.5px;line-height:36px;color:#3d434b;letter-spacing:0.534px;">Customer demographics</span>
<span class="t" style="left:2276.60px;top:125px;font-size:27px;line-height:36px;color:#0f1115;letter-spacing:0.716px;">Add filter</span>
<span class="t" style="left:2557.60px;top:125px;font-size:27px;line-height:36px;color:#0f1115;letter-spacing:0.292px;">Edit</span>
<span class="t" style="left:2730.20px;top:125px;font-size:27px;line-height:36px;color:#0f1115;letter-spacing:0.017px;">Share</span>
<span class="t m" style="left:85.60px;top:276px;font-size:20px;line-height:26px;color:#14161a;letter-spacing:0.798px;">10K</span>
<span class="t m" style="left:85.10px;top:462px;font-size:20px;line-height:26px;color:#14161a;">0</span>
<span class="t" style="left:751.29px;top:428px;font-size:22px;line-height:29px;color:#fff;-webkit-text-stroke:0;letter-spacing:0.785px;"><i>1</i>,299</span>
<span class="t" style="left:236.55px;top:520px;font-size:22.5px;line-height:30px;color:#1a1c20;letter-spacing:1.082px;">male</span>
<span class="t" style="left:484.80px;top:520px;font-size:22.5px;line-height:30px;color:#1a1c20;letter-spacing:0.596px;">female</span>
<span class="t" style="left:757.60px;top:520px;font-size:22.5px;line-height:30px;color:#1a1c20;letter-spacing:0.750px;">N/A</span>
<span class="t" style="left:417.70px;top:579px;font-size:27px;line-height:36px;color:#0f1115;letter-spacing:0.401px;">User gender</span>
<span class="t m" style="left:1051.50px;top:225px;font-size:20px;line-height:26px;color:#14161a;letter-spacing:1.131px;">100K</span>
<span class="t m" style="left:1051.20px;top:335px;font-size:20px;line-height:26px;color:#14161a;letter-spacing:1.098px;">50K</span>
<span class="t m" style="left:1051.20px;top:443px;font-size:20px;line-height:26px;color:#14161a;">0</span>
<span class="t" style="left:1241.50px;top:493px;font-size:21.5px;line-height:28px;color:#1a1c20;letter-spacing:0.595px;">24/03/2025</span>
<span class="t" style="left:1595.50px;top:493px;font-size:21.5px;line-height:28px;color:#1a1c20;letter-spacing:0.372px;">07/04/2025</span>
<span class="t" style="left:1411.35px;top:551px;font-size:27px;line-height:36px;color:#0f1115;letter-spacing:0.877px;">Country</span>
<span class="t m" style="left:2017.80px;top:225px;font-size:20px;line-height:26px;color:#14161a;letter-spacing:1.198px;">300K</span>
<span class="t m" style="left:2017.80px;top:298px;font-size:20px;line-height:26px;color:#14161a;letter-spacing:1.198px;">200K</span>
<span class="t m" style="left:2018.20px;top:371px;font-size:20px;line-height:26px;color:#14161a;letter-spacing:1.065px;">100K</span>
<span class="t m" style="left:2017.80px;top:443px;font-size:20px;line-height:26px;color:#14161a;">0</span>
<span class="t" style="left:2208.00px;top:493px;font-size:21.5px;line-height:28px;color:#1a1c20;letter-spacing:0.595px;">24/03/2025</span>
<span class="t" style="left:2562.80px;top:493px;font-size:21.5px;line-height:28px;color:#1a1c20;letter-spacing:0.261px;">07/04/2025</span>
<span class="t" style="left:2314.75px;top:551px;font-size:27px;line-height:36px;color:#0f1115;letter-spacing:0.862px;">Customer cohorts</span>
<span class="t" style="left:71.80px;top:694px;font-size:31px;line-height:41px;color:#0f1115;letter-spacing:0.474px;">Customer Events by Age Group</span>
<span class="t" style="left:72.20px;top:744px;font-size:26.5px;line-height:35px;color:#454a52;letter-spacing:0.833px;">View event distribution across age groups to understand age-specific customer behavior.</span>
<span class="t" style="left:117.00px;top:811px;font-size:27px;line-height:36px;color:#0f1115;letter-spacing:0.402px;">2 Properties</span>
<span class="t" style="left:392.70px;top:811px;font-size:27px;line-height:36px;color:#0f1115;letter-spacing:0.460px;">7 Metrics</span>
<span class="t" style="left:665.60px;top:818px;font-size:20px;line-height:26px;color:#0f1115;">1</span>
<span class="t" style="left:2732.30px;top:784px;font-size:23.5px;line-height:31px;color:#fff;-webkit-text-stroke:0;letter-spacing:-0.646px;">Reveal</span>
<span class="t" style="left:70.40px;top:918px;font-size:21px;line-height:28px;color:#3d434c;font-weight:700;">#</span>
<span class="t" style="left:150.40px;top:913px;font-size:27px;line-height:36px;color:#3d434c;letter-spacing:0.512px;">Life events</span>
<span class="t" style="left:458.60px;top:913px;font-size:27px;line-height:36px;color:#3d434c;letter-spacing:0.500px;">User age group</span>
<span class="t" style="left:956.00px;top:913px;font-size:27px;line-height:36px;color:#3d434c;letter-spacing:-0.251px;">Users</span>
<span class="t" style="left:1228.30px;top:913px;font-size:27px;line-height:36px;color:#3d434c;letter-spacing:0.380px;">Car loan</span>
<span class="t" style="left:1417.30px;top:913px;font-size:27px;line-height:36px;color:#3d434c;letter-spacing:0.850px;">Construction loan</span>
<span class="t" style="left:1766.70px;top:913px;font-size:27px;line-height:36px;color:#3d434c;letter-spacing:0.834px;">Mortgage loan</span>
<span class="t" style="left:2097.30px;top:913px;font-size:27px;line-height:36px;color:#3d434c;letter-spacing:0.772px;">Student loan</span>
<span class="t" style="left:2398.80px;top:913px;font-size:27px;line-height:36px;color:#3d434c;letter-spacing:0.112px;">Treasury loan</span>
<span class="t" style="left:2789.00px;top:913px;font-size:27px;line-height:36px;color:#3d434c;letter-spacing:-0.008px;">Events</span>
<span class="t" style="left:69.00px;top:996px;font-size:27px;line-height:36px;color:#9a9da1;">1</span>
<span class="t" style="left:142.00px;top:996px;font-size:27px;line-height:36px;color:#0f1115;letter-spacing:0.466px;">Opening a first acc...</span>
<span class="t" style="left:449.30px;top:996px;font-size:27px;line-height:36px;color:#0f1115;letter-spacing:0.365px;">25-34</span>
<span class="t" style="left:970.20px;top:996px;font-size:27px;line-height:36px;color:#0f1115;letter-spacing:-1.362px;"><i>1</i>,77<i>1</i></span>
<span class="t" style="left:1318.00px;top:996px;font-size:27px;line-height:36px;color:#0f1115;">0</span>
<span class="t" style="left:1589.90px;top:996px;font-size:27px;line-height:36px;color:#0f1115;letter-spacing:3.034px;">909</span>
<span class="t" style="left:1934.30px;top:996px;font-size:27px;line-height:36px;color:#0f1115;">0</span>
<span class="t" style="left:2192.60px;top:996px;font-size:27px;line-height:36px;color:#0f1115;letter-spacing:0.463px;"><i>1</i>,705</span>
<span class="t" style="left:2494.50px;top:996px;font-size:27px;line-height:36px;color:#0f1115;letter-spacing:0.588px;">3,542</span>
<span class="t" style="left:2785.30px;top:996px;font-size:27px;line-height:36px;color:#0f1115;letter-spacing:0.827px;">25,550</span>
<span class="t" style="left:69.50px;top:1078px;font-size:27px;line-height:36px;color:#9a9da1;">2</span>
<span class="t" style="left:142.00px;top:1078px;font-size:27px;line-height:36px;color:#0f1115;letter-spacing:0.466px;">Opening a first acc...</span>
<span class="t" style="left:449.30px;top:1078px;font-size:27px;line-height:36px;color:#0f1115;letter-spacing:0.365px;">35-44</span>
<span class="t" style="left:966.00px;top:1078px;font-size:27px;line-height:36px;color:#0f1115;letter-spacing:-0.862px;"><i>1</i>,767</span>
<span class="t" style="left:1318.00px;top:1078px;font-size:27px;line-height:36px;color:#0f1115;">0</span>
<span class="t" style="left:1595.10px;top:1078px;font-size:27px;line-height:36px;color:#0f1115;letter-spacing:0.434px;">847</span>
<span class="t" style="left:1934.30px;top:1078px;font-size:27px;line-height:36px;color:#0f1115;">0</span>
<span class="t" style="left:2191.90px;top:1078px;font-size:27px;line-height:36px;color:#0f1115;letter-spacing:0.638px;"><i>1</i>,588</span>
<span class="t" style="left:2493.50px;top:1078px;font-size:27px;line-height:36px;color:#0f1115;letter-spacing:0.588px;">3,534</span>
<span class="t" style="left:2784.20px;top:1078px;font-size:27px;line-height:36px;color:#0f1115;letter-spacing:1.047px;">24,506</span>
<span class="t" style="left:69.50px;top:1160px;font-size:27px;line-height:36px;color:#9a9da1;">3</span>
<span class="t" style="left:142.00px;top:1160px;font-size:27px;line-height:36px;color:#0f1115;letter-spacing:0.466px;">Opening a first acc...</span>
<span class="t" style="left:449.30px;top:1160px;font-size:27px;line-height:36px;color:#0f1115;letter-spacing:0.365px;">55-64</span>
<span class="t" style="left:964.70px;top:1160px;font-size:27px;line-height:36px;color:#0f1115;letter-spacing:-0.537px;"><i>1</i>,762</span>
<span class="t" style="left:1318.00px;top:1160px;font-size:27px;line-height:36px;color:#0f1115;">0</span>
<span class="t" style="left:1590.90px;top:1160px;font-size:27px;line-height:36px;color:#0f1115;letter-spacing:2.534px;">902</span>
<span class="t" style="left:1934.30px;top:1160px;font-size:27px;line-height:36px;color:#0f1115;">0</span>
<span class="t" style="left:2196.20px;top:1160px;font-size:27px;line-height:36px;color:#0f1115;letter-spacing:0.113px;"><i>1</i>,69<i>1</i></span>
<span class="t" style="left:2495.60px;top:1160px;font-size:27px;line-height:36px;color:#0f1115;letter-spacing:0.063px;">3,524</span>
<span class="t" style="left:2786.40px;top:1160px;font-size:27px;line-height:36px;color:#0f1115;letter-spacing:0.607px;">25,963</span>
<span class="t" style="left:69.50px;top:1242px;font-size:27px;line-height:36px;color:#9a9da1;">4</span>
<span class="t" style="left:142.00px;top:1242px;font-size:27px;line-height:36px;color:#0f1115;letter-spacing:0.466px;">Opening a first acc...</span>
<span class="t" style="left:450.30px;top:1242px;font-size:27px;line-height:36px;color:#0f1115;letter-spacing:0.115px;">45-54</span>
<span class="t" style="left:958.30px;top:1242px;font-size:27px;line-height:36px;color:#0f1115;letter-spacing:1.063px;"><i>1</i>,660</span>
<span class="t" style="left:1318.00px;top:1242px;font-size:27px;line-height:36px;color:#0f1115;">0</span>
<span class="t" style="left:1592.30px;top:1242px;font-size:27px;line-height:36px;color:#0f1115;letter-spacing:1.334px;">834</span>
<span class="t" style="left:1934.30px;top:1242px;font-size:27px;line-height:36px;color:#0f1115;">0</span>
<span class="t" style="left:2191.90px;top:1242px;font-size:27px;line-height:36px;color:#0f1115;letter-spacing:0.388px;"><i>1</i>,564</span>
<span class="t" style="left:2492.80px;top:1242px;font-size:27px;line-height:36px;color:#0f1115;letter-spacing:1.013px;">3,320</span>
<span class="t" style="left:2785.70px;top:1242px;font-size:27px;line-height:36px;color:#0f1115;letter-spacing:0.747px;">23,849</span>
<span class="t" style="left:219.40px;top:1321px;font-size:27px;line-height:36px;color:#454a52;letter-spacing:0.404px;">Total (All items)</span>
<span class="t" style="left:959.60px;top:1321px;font-size:27px;line-height:36px;color:#454a52;letter-spacing:-0.412px;">9,723</span>
<span class="t" style="left:1264.10px;top:1321px;font-size:27px;line-height:36px;color:#454a52;letter-spacing:0.338px;">2,708</span>
<span class="t" style="left:1563.90px;top:1321px;font-size:27px;line-height:36px;color:#454a52;letter-spacing:-0.173px;"><i>1</i>4,472</span>
<span class="t" style="left:1878.10px;top:1321px;font-size:27px;line-height:36px;color:#454a52;letter-spacing:0.913px;">2,949</span>
<span class="t" style="left:2180.90px;top:1321px;font-size:27px;line-height:36px;color:#454a52;letter-spacing:-0.292px;">27,<i>1</i>36</span>
<span class="t" style="left:2482.00px;top:1321px;font-size:27px;line-height:36px;color:#454a52;letter-spacing:0.887px;"><i>1</i>9,446</span>
<span class="t" style="left:2780.00px;top:1321px;font-size:27px;line-height:36px;color:#454a52;letter-spacing:-0.163px;">527,<i>1</i>05</span>
</div>
</div></body></html>
